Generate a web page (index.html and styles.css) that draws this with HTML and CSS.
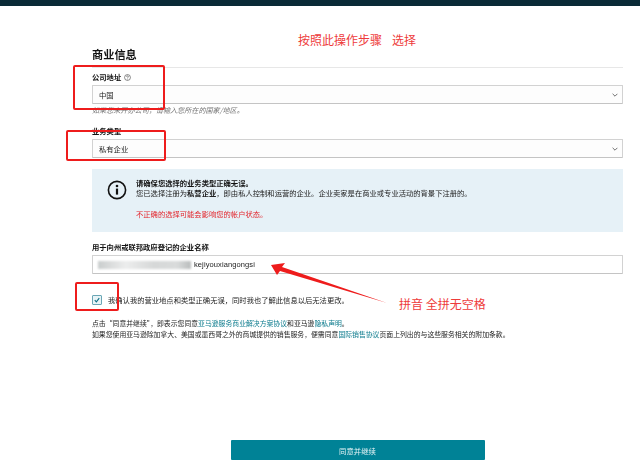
FILE: index.html
```html
<!DOCTYPE html>
<html lang="zh-CN">
<head>
  <meta charset="UTF-8" />
  <title>商业信息</title>
  <meta name="viewport" content="width=device-width, initial-scale=1" />
  <link rel="stylesheet" href="styles.css">
</head>
<body>

<div class="topbar"></div>

<main class="form">
  <h1>商业信息</h1>

  <div class="label first">公司地址
    <svg class="help" viewBox="0 0 10 10" width="7" height="7">
      <circle cx="5" cy="5" r="4.2" fill="none" stroke="#333" stroke-width="0.8"/>
      <path d="M3.7 4a1.3 1.3 0 1 1 2 1.1c-.5.3-.7.5-.7 1" fill="none" stroke="#333" stroke-width="0.8"/>
      <circle cx="5" cy="7.5" r="0.5" fill="#333"/>
    </svg>
  </div>
  <div class="select">
    <span>中国</span>
    <svg class="chevron" viewBox="0 0 10 6" width="6" height="4"><path d="M1 1l4 4 4-4" fill="none" stroke="#555" stroke-width="1.4"/></svg>
  </div>
  <p class="hint">如果您未开办公司，请输入您所在的国家/地区。</p>

  <div class="label second">业务类型</div>
  <div class="select">
    <span>私有企业</span>
    <svg class="chevron" viewBox="0 0 10 6" width="6" height="4"><path d="M1 1l4 4 4-4" fill="none" stroke="#555" stroke-width="1.4"/></svg>
  </div>

  <section class="notice">
    <svg class="notice-icon" viewBox="0 0 20 20" width="20" height="20">
      <circle cx="10" cy="10" r="8.6" fill="none" stroke="#111" stroke-width="1.6"/>
      <rect x="8.9" y="8.6" width="2.2" height="6" fill="#111"/>
      <circle cx="10" cy="6" r="1.3" fill="#111"/>
    </svg>
    <div class="notice-text">
      <div class="notice-title">请确保您选择的业务类型正确无误。</div>
      <div>您已选择注册为<b>私营企业</b>，即由私人控制和运营的企业。企业卖家是在商业或专业活动的背景下注册的。</div>
      <div class="notice-warn">不正确的选择可能会影响您的帐户状态。</div>
    </div>
  </section>

  <div class="label third">用于向州或联邦政府登记的企业名称</div>
  <div class="input">
    <span class="smudge"></span>
    <span>kejiyouxiangongsi</span>
  </div>

  <label class="confirm">
    <span class="checkbox">
      <svg viewBox="0 0 10 10" width="8" height="8"><path d="M2.2 5.2l2 2.2 3.6-4.8" fill="none" stroke="#0b6f85" stroke-width="1.3"/></svg>
    </span>
    我确认我的营业地点和类型正确无误，同时我也了解此信息以后无法更改。
  </label>

  <p class="terms">点击“同意并继续”，即表示您同意<a href="#">亚马逊服务商业解决方案协议</a>和亚马逊<a href="#">隐私声明</a>。<br>
  如果您使用亚马逊除加拿大、美国或墨西哥之外的商城提供的销售服务，便需同意<a href="#">国际销售协议</a>页面上列出的与这些服务相关的附加条款。</p>

  <div class="actions">
    <button class="submit">同意并继续</button>
  </div>
</main>

<!-- Red notes drawn over the screenshot -->
<div class="note note-top">按照此操作步骤<span class="note-gap"></span>选择</div>
<div class="note note-pinyin">拼音 全拼无空格</div>
<div class="mark mark-address"></div>
<div class="mark mark-type"></div>
<div class="mark mark-check"></div>
<svg class="arrow" viewBox="0 0 640 473" width="640" height="473">
  <polygon points="271,265 285,263 282,267 387,303 280,271 277,275" fill="#ee1c1c"/>
</svg>

</body>
</html>
```

FILE: styles.css
```css
body {
  font-family: "Noto Sans CJK SC", "Liberation Sans", sans-serif;
  margin: 0;
  background: #fff;
  color: #222;
  font-size: 7.3px;
  line-height: 10px;
}
.topbar {
  height: 6px;
  background: #0a2a36;
}
.form {
  width: 531px;
  margin-left: 92px;
  filter: blur(0.25px);
}
h1 {
  font-size: 11.2px;
  line-height: 14px;
  font-weight: 700;
  color: #111;
  margin: 41px 0 0;
  padding-bottom: 6px;
  border-bottom: 1px solid #e7e7e7;
}
.label {
  font-weight: 700;
  color: #111;
  display: flex;
  align-items: center;
  gap: 3px;
}
.label.first { margin-top: 4px; }
.label.second { margin-top: 11px; }
.label.third { margin-top: 10px; }
.select, .input {
  height: 17px;
  margin-top: 3px;
  border: 1px solid #d2d2d2;
  border-bottom-color: #c4c4c4;
  border-radius: 1px;
  display: flex;
  align-items: center;
  padding: 0 4px 0 6px;
  background: #fff;
  color: #222;
}
.select {
  justify-content: space-between;
  background: #fdfdfd;
}
.hint {
  margin: 1px 0 0;
  font-style: italic;
  color: #777;
  font-size: 7.1px;
}
.notice {
  margin-top: 11px;
  height: 63px;
  background: #e6f1f7;
  display: flex;
  box-sizing: border-box;
  padding: 9px 0 0 15px;
}
.notice-icon { margin-top: 2px; }
.notice-text { margin-left: 9px; }
.notice-title { font-weight: 700; color: #111; }
.notice-warn {
  margin-top: 11px;
  color: #e3242b;
}
.input {
  padding-left: 0;
  font-family: "Liberation Sans", sans-serif;
  font-size: 7.5px;
  letter-spacing: 0.1px;
}
.smudge {
  width: 93px;
  height: 8px;
  margin: 0 3px 0 5px;
  background: linear-gradient(90deg, #c9cdcd 0%, #d8dada 12%, #eceded 30%, #d6d8d8 60%, #d9dbdb 85%, #b9bcbc 100%);
  filter: blur(1.2px);
}
.confirm {
  display: flex;
  align-items: center;
  gap: 6px;
  margin-top: 21px;
}
.checkbox {
  width: 8px;
  height: 8px;
  border: 1px solid #6aa6b5;
  border-radius: 1px;
  background: #e8f4f7;
  display: flex;
}
.terms {
  margin: 13px 0 0;
  font-size: 6.85px;
  line-height: 11px;
  color: #222;
}
.terms a {
  color: #0a7a8c;
  text-decoration: none;
}
.actions {
  margin-top: 100px;
  display: flex;
  justify-content: center;
}
.submit {
  width: 254px;
  height: 20px;
  border: 0;
  border-radius: 1px;
  background: #008296;
  color: #e6f4f6;
  font-family: inherit;
  font-size: 7.4px;
}

/* annotations */
.note {
  position: absolute;
  color: #ee3b3b;
  font-size: 12px;
  line-height: 16px;
  white-space: nowrap;
}
.note-gap {
  display: inline-block;
  width: 10px;
}
.note-top { left: 298px; top: 32px; }
.note-pinyin { left: 399px; top: 296px; }
.mark {
  position: absolute;
  border: 2px solid #ee1c1c;
  border-radius: 2px;
  box-sizing: border-box;
}
.mark-address { left: 73px; top: 65px; width: 92px; height: 45px; }
.mark-type { left: 66px; top: 130px; width: 100px; height: 31px; }
.mark-check { left: 75px; top: 282px; width: 44px; height: 29px; }
.arrow {
  position: absolute;
  left: 0;
  top: 0;
}
```
